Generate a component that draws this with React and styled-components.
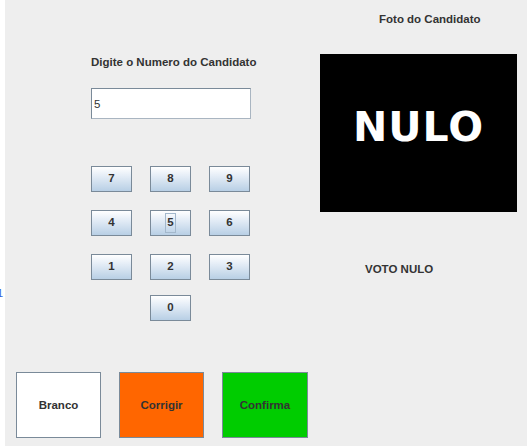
import React from "react";
import styled, { createGlobalStyle } from "styled-components";

const GlobalStyle = createGlobalStyle`
  html, body {
    margin: 0;
    padding: 0;
    background: #ffffff;
  }
  * {
    box-sizing: border-box;
  }
`;

const keys = [
  ["7", "8", "9"],
  ["4", "5", "6"],
  ["1", "2", "3"],
];

const Frame = styled.div`
  display: flex;
  width: 527px;
  height: 446px;
  font-family: "Liberation Sans", Arial, sans-serif;
  color: #333333;
`;

const EdgeStrip = styled.div`
  width: 5px;
  background: #ffffff;
  overflow: hidden;
  padding-top: 287px;
`;

const EdgeGlyph = styled.span`
  display: block;
  margin-left: -3px;
  font-size: 11px;
  line-height: 12px;
  color: #3264dc;
`;

const Panel = styled.div`
  flex: 1;
  display: flex;
  flex-direction: column;
  background: #eeeeee;
`;

const Top = styled.div`
  flex: 1;
  display: grid;
  grid-template-columns: 315px 197px;
`;

const EntryColumn = styled.div`
  display: flex;
  flex-direction: column;
  align-items: flex-start;
  padding: 55px 0 0 86px;
`;

const Label = styled.div`
  font-size: 11.5px;
  font-weight: bold;
  line-height: 15px;
  white-space: nowrap;
  padding-left: ${(p) => p.$indent || 0}px;
`;

const NumberField = styled.div`
  margin-top: 18px;
  width: 160px;
  height: 31px;
  background: #ffffff;
  border: 1px solid #7a8a99;
  border-right-color: #a9b5c1;
  border-bottom-color: #a9b5c1;
  display: flex;
  align-items: center;
  padding-left: 2px;
  font-size: 11.5px;
`;

const Keypad = styled.div`
  margin-top: 47px;
  display: grid;
  grid-template-columns: repeat(3, 41px);
  grid-auto-rows: 26px;
  column-gap: 18px;
  row-gap: 18px;
`;

const Key = styled.button`
  margin: 0;
  padding: 0;
  width: 41px;
  height: 26px;
  border: 1px solid #7a8a99;
  border-radius: 0;
  background: linear-gradient(to bottom, #ffffff 0%, #e6eef7 35%, #b8cfe5 100%);
  font-family: "Liberation Sans", Arial, sans-serif;
  font-size: 11.5px;
  font-weight: bold;
  color: #333333;
  display: flex;
  align-items: center;
  justify-content: center;
  grid-column: ${(p) => p.$col || "auto"};
  margin-top: ${(p) => p.$shift || 0}px;
`;

const KeyText = styled.span`
  display: inline-block;
  padding: 2px 1px 3px;
  line-height: 13px;
  outline: ${(p) => (p.$focused ? "1px solid #a3b8cc" : "none")};
`;

const PhotoColumn = styled.div`
  display: flex;
  flex-direction: column;
  padding-top: 12px;
`;

const Photo = styled.div`
  margin-top: 27px;
  width: 197px;
  height: 158px;
  background: #000000;
  display: flex;
  align-items: center;
  justify-content: center;
  padding-bottom: 12px;
`;

const PhotoText = styled.span`
  font-family: "DejaVu Sans", Verdana, sans-serif;
  font-weight: bold;
  font-size: 41px;
  letter-spacing: 1px;
  color: #ffffff;
`;

const Result = styled(Label)`
  margin-top: 50px;
`;

const ActionRow = styled.div`
  display: flex;
  gap: 18px;
  padding: 0 0 8px 11px;
`;

const Action = styled.button`
  margin: 0;
  width: ${(p) => p.$w || 85}px;
  height: 66px;
  border: 1px solid #7a8a99;
  border-radius: 0;
  background: ${(p) => p.$bg};
  font-family: "Liberation Sans", Arial, sans-serif;
  font-size: 11.5px;
  font-weight: bold;
  color: #333333;
  padding: 0;
`;

export default function App() {
  return (
    <>
      <GlobalStyle />
      <Frame>
        <EdgeStrip>
          <EdgeGlyph>1</EdgeGlyph>
        </EdgeStrip>
        <Panel>
          <Top>
            <EntryColumn>
              <Label>Digite o Numero do Candidato</Label>
              <NumberField>5</NumberField>
              <Keypad>
                {keys.flat().map((k) => (
                  <Key key={k}>
                    <KeyText $focused={k === "5"}>{k}</KeyText>
                  </Key>
                ))}
                <Key $col={2} $shift={-3}>
                  <KeyText>0</KeyText>
                </Key>
              </Keypad>
            </EntryColumn>
            <PhotoColumn>
              <Label $indent={59}>Foto do Candidato</Label>
              <Photo>
                <PhotoText>NULO</PhotoText>
              </Photo>
              <Result $indent={45}>VOTO NULO</Result>
            </PhotoColumn>
          </Top>
          <ActionRow>
            <Action $bg="#ffffff">Branco</Action>
            <Action $bg="#ff6600">Corrigir</Action>
            <Action $bg="#00cc00" $w={86}>Confirma</Action>
          </ActionRow>
        </Panel>
      </Frame>
    </>
  );
}
